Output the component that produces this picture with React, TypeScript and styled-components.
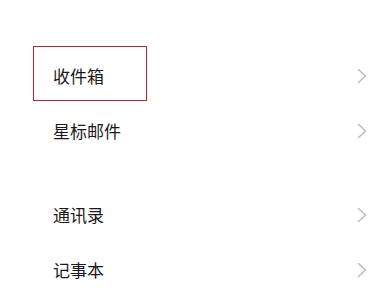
import React from "react";
import styled, { createGlobalStyle } from "styled-components";

const Global = createGlobalStyle`
  html, body { margin: 0; padding: 0; background: #ffffff; }
  body { font-family: "Noto Sans CJK SC", "Noto Sans", sans-serif; }
`;

const Page = styled.div`
  width: 384px;
  height: 294px;
  overflow: hidden;
  background: #ffffff;
  padding-top: 46px;
  box-sizing: border-box;
`;

const Group = styled.div<{ $gapAfter?: number }>`
  display: flex;
  flex-direction: column;
  margin-bottom: ${(p) => p.$gapAfter ?? 0}px;
`;

const Row = styled.div`
  height: 55px;
  display: flex;
  align-items: center;
  justify-content: space-between;
  padding: 0 17px 0 33px;
  box-sizing: border-box;
`;

const Label = styled.div<{ $active?: boolean }>`
  width: 114px;
  height: 55px;
  box-sizing: border-box;
  display: flex;
  align-items: center;
  padding: 4px 0 0 19px;
  border: 1px solid ${(p) => (p.$active ? "#b3272d" : "transparent")};
  font-size: 17px;
  font-weight: 400;
  color: #1a1a1a;
  white-space: nowrap;
`;

const Chevron = styled.svg`
  width: 10px;
  height: 16px;
  margin-top: 4px;
  display: block;
`;

const Arrow = () => (
  <Chevron viewBox="0 0 10 16">
    <path d="M1.5 1.5 L8.5 8 L1.5 14.5" fill="none" stroke="#bdbdbd" strokeWidth="1.6" strokeLinecap="round" strokeLinejoin="round" />
  </Chevron>
);

const groups = [
  [{ t: "收件箱", active: true }, { t: "星标邮件" }],
  [{ t: "通讯录" }, { t: "记事本" }],
];

export default function App() {
  return (
    <>
      <Global />
      <Page>
        {groups.map((g, i) => (
          <Group key={i} $gapAfter={i === 0 ? 29 : 0}>
            {g.map((it) => (
              <Row key={it.t}>
                <Label $active={(it as any).active}>{it.t}</Label>
                <Arrow />
              </Row>
            ))}
          </Group>
        ))}
      </Page>
    </>
  );
}
